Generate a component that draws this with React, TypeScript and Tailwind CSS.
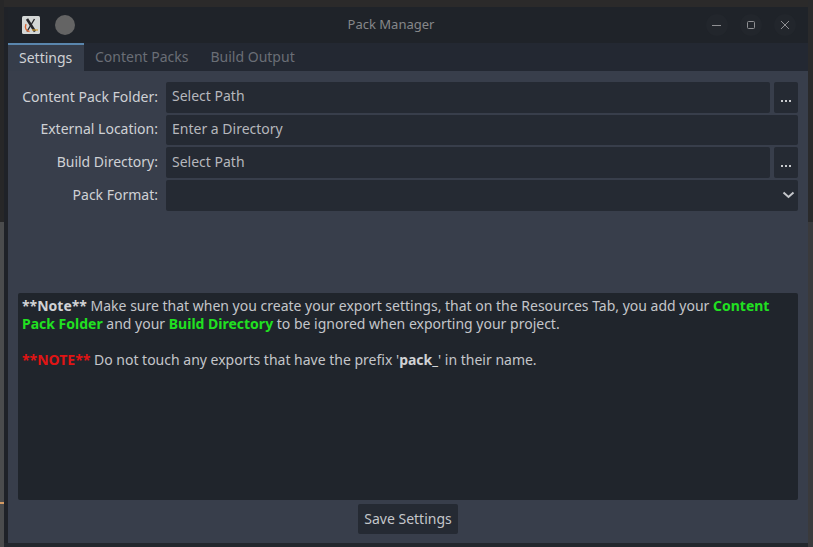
import React from "react";

const font = { fontFamily: '"Noto Sans", sans-serif' };

function Row({ label, children }: { label: string; children: React.ReactNode }) {
  return (
    <div className="flex h-[30.67px] gap-[8px]">
      <div className="flex w-[140px] shrink-0 items-center justify-end pb-[2px] text-[#cfd1d5]">{label}</div>
      <div className="flex min-w-0 flex-1 gap-[4px]">{children}</div>
    </div>
  );
}

function Field({ text }: { text?: string }) {
  return (
    <div className="flex h-full flex-1 items-center rounded-[2px] bg-[#252a33] pb-[3px] pl-[6px] text-[#b5b7bc]">{text}</div>
  );
}

function Dots() {
  return (
    <div className="flex h-full w-[24px] shrink-0 items-center justify-center rounded-[2px] bg-[#252a33] pt-[8px]">
      <svg width="10" height="3" viewBox="0 0 10 3">
        <rect x="0" y="0" width="2" height="2" fill="#c8cacd" />
        <rect x="4" y="0" width="2" height="2" fill="#c8cacd" />
        <rect x="8" y="0" width="2" height="2" fill="#c8cacd" />
      </svg>
    </div>
  );
}

function WinButton({ children }: { children: React.ReactNode }) {
  return <div className="flex h-[22px] w-[22px] items-center justify-center rounded-full bg-[#22262c]">{children}</div>;
}

export default function App() {
  return (
    <div style={font} className="h-[547px] w-[813px] overflow-hidden bg-[#26282c] text-[14px]">
      <div className="flex h-full">
        <div className="flex w-[4px] shrink-0 flex-col">
          <div className="h-[222px] bg-[#272728]" />
          <div className="h-[280px] bg-[#4b4c4d]" />
          <div className="h-[2px] bg-[#d59a62]" />
          <div className="flex-1 bg-[#4b4c4d]" />
        </div>
        <div className="flex w-[804px] shrink-0 flex-col">
          <div className="h-[7px] shrink-0 bg-[#2b2a2a]" />
          <div className="flex min-h-0 flex-1 flex-col bg-[#1f2228] pl-[4px]">
            <div className="relative flex h-[36px] shrink-0 items-center bg-[#1f2329] pl-[14px]">
              <svg width="18" height="18" viewBox="0 0 18 18" className="shrink-0">
                <rect width="18" height="18" rx="1.5" fill="#d4d7d6" />
                <path d="M5 3 L13 15.5" stroke="#26262a" strokeWidth="2.6" />
                <path d="M12.5 3 L5 15.5" stroke="#26262a" strokeWidth="1.4" />
                <path d="M4 8 C2.5 12 4 15 7.5 15.5" stroke="#d9622f" strokeWidth="1.3" fill="none" />
                <path d="M10 14 H16" stroke="#d9a02f" strokeWidth="1.2" fill="none" />
              </svg>
              <div className="ml-[15px] h-[20px] w-[20px] rounded-full bg-[#646464]" />
              <div className="absolute inset-x-0 top-[9px] pr-[34px] text-center text-[13px] leading-[16px] text-[#85878a]">Pack Manager</div>
              <div className="mr-[12px] ml-auto flex items-center gap-[12px]">
                <WinButton>
                  <svg width="10" height="10" viewBox="0 0 10 10"><path d="M0 5.5 H9" stroke="#8f9093" strokeWidth="1" /></svg>
                </WinButton>
                <WinButton>
                  <svg width="10" height="10" viewBox="0 0 10 10"><rect x="1.5" y="1.5" width="7" height="7" rx="1" fill="none" stroke="#8f9093" strokeWidth="1" /></svg>
                </WinButton>
                <WinButton>
                  <svg width="10" height="10" viewBox="0 0 10 10"><path d="M1 1 L9 9 M9 1 L1 9" stroke="#8f9093" strokeWidth="1" /></svg>
                </WinButton>
              </div>
            </div>

            <div className="flex h-[28px] shrink-0 bg-[#232832]">
              <div className="w-[76px] border-t-[2px] border-[#5a86ad] bg-[#363d4a] pl-[11px] leading-[26px] text-[#cfd1d5]">Settings</div>
              <div className="ml-[11px] leading-[28px] text-[#6a6e76]">Content Packs</div>
              <div className="ml-[22px] leading-[28px] text-[#6a6e76]">Build Output</div>
            </div>

            <div className="flex min-h-0 flex-1 flex-col bg-[#383e4b] px-[10px] pt-[11px]">
              <div className="flex flex-col gap-[2px]">
                <Row label="Content Pack Folder:">
                  <Field text="Select Path" />
                  <Dots />
                </Row>
                <Row label="External Location:">
                  <Field text="Enter a Directory" />
                </Row>
                <Row label="Build Directory:">
                  <Field text="Select Path" />
                  <Dots />
                </Row>
                <Row label="Pack Format:">
                  <div className="flex h-full flex-1 items-center justify-end rounded-[2px] bg-[#252a33] pr-[3px] pb-[1px]">
                    <svg width="13" height="8" viewBox="0 0 13 8">
                      <path d="M1.5 1.5 L6.5 6 L11.5 1.5" fill="none" stroke="#c4c6ca" strokeWidth="2" />
                    </svg>
                  </div>
                </Row>
              </div>
              <div className="mt-[82.3px] h-[207px] shrink-0 rounded-[2px] bg-[#20252c] p-[4px] leading-[18px] text-[#c4c6ca]">
                <div>
                  <b className="font-bold text-[#d0d2d5]">**Note**</b> Make sure that when you create your export settings, that on the Resources Tab, you add your <b className="font-bold text-[#21e021]">Content Pack Folder</b> and your <b className="font-bold text-[#21e021]">Build Directory</b> to be ignored when exporting your project.
                </div>
                <div className="mt-[18px]">
                  <b className="font-bold text-[#e01414]">**NOTE**</b> Do not touch any exports that have the prefix '<b className="font-bold text-[#d0d2d5]">pack_</b>' in their name.
                </div>
              </div>
              <div className="mt-[4px] flex justify-center">
                <div className="flex h-[30px] w-[100px] items-center justify-center rounded-[2px] bg-[#252a33] pb-[1px] text-[#c4c6ca]">Save Settings</div>
              </div>
            </div>
          </div>
          <div className="h-[4px] shrink-0 bg-[#23272d]" />
        </div>
        <div className="flex flex-1 flex-col">
          <div className="h-[222px] bg-[#2a2a2b]" />
          <div className="flex-1 bg-[#3a3a3c]" />
        </div>
      </div>
    </div>
  );
}
